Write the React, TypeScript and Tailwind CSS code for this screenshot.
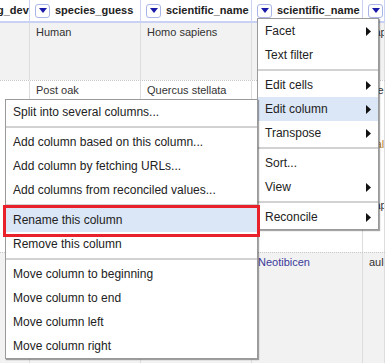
import React from "react";

const SubArrow = () => (
  <svg width="5" height="9" viewBox="0 0 5 9" className="shrink-0">
    <polygon points="0,0 5,4.5 0,9" fill="#111" />
  </svg>
);

const DropBtn = () => (
  <div className="w-[15px] h-[14px] shrink-0 rounded-[3px] border border-[#a9b5e8] bg-white flex items-center justify-center">
    <svg width="8" height="5" viewBox="0 0 8 5">
      <polygon points="0,0 8,0 4,5" fill="#1a1aa8" />
    </svg>
  </div>
);

type Item = { label: string; arrow?: boolean; active?: boolean } | "sep";

const mainMenu: Item[] = [
  { label: "Facet", arrow: true },
  { label: "Text filter" },
  "sep",
  { label: "Edit cells", arrow: true },
  { label: "Edit column", arrow: true, active: true },
  { label: "Transpose", arrow: true },
  "sep",
  { label: "Sort..." },
  { label: "View", arrow: true },
  "sep",
  { label: "Reconcile", arrow: true },
];

const subMenu: Item[] = [
  { label: "Split into several columns..." },
  "sep",
  { label: "Add column based on this column..." },
  { label: "Add column by fetching URLs..." },
  { label: "Add columns from reconciled values..." },
  "sep",
  { label: "Rename this column", active: true },
  { label: "Remove this column" },
  "sep",
  { label: "Move column to beginning" },
  { label: "Move column to end" },
  { label: "Move column left" },
  { label: "Move column right" },
];

function MenuItems({ items }: { items: Item[] }) {
  return (
    <>
      {items.map((it, i) =>
        it === "sep" ? (
          <div key={i} className="py-[2px]">
            <div className="h-[2px] bg-[#d2d2d2]" />
          </div>
        ) : (
          <div
            key={i}
            className={`h-[24px] flex items-center justify-between pl-[7px] pr-[7px] text-[12px] text-[#222] whitespace-nowrap ${
              it.active ? "bg-[#dbe6f7]" : ""
            }`}
          >
            <span>{it.label}</span>
            {it.arrow && <SubArrow />}
          </div>
        )
      )}
    </>
  );
}

const cols = ["w-[30px]", "w-[111px]", "w-[111px]", "w-[111px]", "flex-1"];

function Cell({ w, children }: { w: string; children?: React.ReactNode }) {
  return (
    <div className={`${w} shrink-0 border-r border-[#dddddd] pl-[6px] pt-[1px] text-[11px] leading-[16px] text-[#333] whitespace-nowrap overflow-hidden`}>
      {children}
    </div>
  );
}

export default function App() {
  return (
    <div className="relative w-[385px] h-[363px] overflow-hidden bg-white font-['Liberation_Sans',Arial,sans-serif]">
      <div className="flex flex-col h-full">
        {/* header */}
        <div className="flex h-[23px] shrink-0 border-b-2 border-[#c9d1f4] bg-white">
          <div className="w-[30px] shrink-0 border-r border-[#cbd3f2] flex items-center overflow-hidden">
            <span className="ml-[-3px] text-[11px] font-bold text-[#222] whitespace-nowrap">g_dev</span>
          </div>
          {["species_guess", "scientific_name", "scientific_name", ""].map((h, i) => (
            <div
              key={i}
              className={`${cols[i + 1]} shrink-0 border-r border-[#cbd3f2] flex items-center gap-[5px] pl-[5px] overflow-hidden`}
            >
              <DropBtn />
              <span className="text-[11px] font-bold text-[#222] whitespace-nowrap">{h}</span>
            </div>
          ))}
        </div>

        {/* row 1 */}
        <div className="flex h-[57px] shrink-0 bg-[#f2f2f2]">
          <Cell w={cols[0]} />
          <Cell w={cols[1]}>Human</Cell>
          <Cell w={cols[2]}>Homo sapiens</Cell>
          <Cell w={cols[3]} />
          <Cell w={cols[4]}>sapiens</Cell>
        </div>

        {/* row 2 */}
        <div className="flex h-[172px] shrink-0 bg-white border-t border-dotted border-[#c8c8c8]">
          <Cell w={cols[0]} />
          <Cell w={cols[1]}>Post oak</Cell>
          <Cell w={cols[2]}>Quercus stellata</Cell>
          <Cell w={cols[3]} />
          <Cell w={cols[4]}>
            <div>stellata</div>
            <div className="mt-[38px] text-[#b07a2c]">Fall</div>
            <div className="mt-[45px]">Japan</div>
          </Cell>
        </div>

        {/* row 3 */}
        <div className="flex flex-1 bg-[#f2f2f2] border-t border-dotted border-[#c8c8c8]">
          <Cell w={cols[0]} />
          <Cell w={cols[1]} />
          <Cell w={cols[2]} />
          <Cell w={cols[3]}>
            <span className="text-[#3a3a9a]">Neotibicen</span>
          </Cell>
          <Cell w={cols[4]}>auletes</Cell>
        </div>
      </div>

      {/* column menu */}
      <div className="absolute left-[257px] top-[18px] w-[122px] bg-white border border-[#9a9a9a] shadow-[1px_1px_1px_rgba(0,0,0,0.35)] z-10">
        <MenuItems items={mainMenu} />
      </div>

      {/* edit column submenu */}
      <div className="absolute left-[5px] top-[99px] w-[253px] bg-white border border-[#9a9a9a] shadow-[1px_1px_1px_rgba(0,0,0,0.35)] z-20">
        <MenuItems items={subMenu} />
      </div>

      {/* highlight box */}
      <div className="absolute left-[3px] top-[205px] w-[257px] h-[32px] border-[3px] border-[#e8212b] z-30" />
    </div>
  );
}
